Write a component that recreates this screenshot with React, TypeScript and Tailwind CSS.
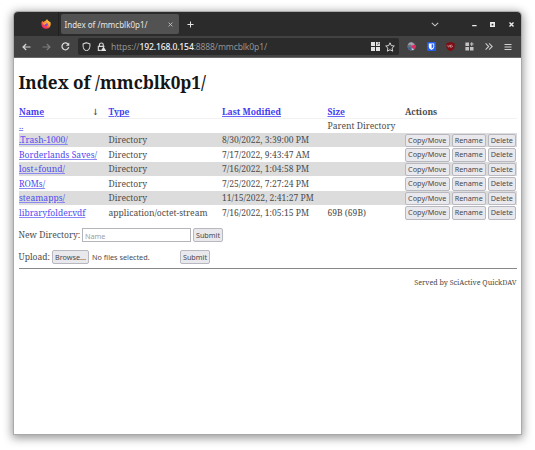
import React from "react";

const serif = "font-['Noto_Serif','DejaVu_Serif_Condensed','DejaVu_Serif',serif] [font-stretch:condensed]";
const sans = "font-['Noto_Sans',sans-serif]";

type Row = { name: string; type: string; modified: string; size: string };

const rows: Row[] = [
  { name: ".Trash-1000/", type: "Directory", modified: "8/30/2022, 3:39:00 PM", size: "" },
  { name: "Borderlands Saves/", type: "Directory", modified: "7/17/2022, 9:43:47 AM", size: "" },
  { name: "lost+found/", type: "Directory", modified: "7/16/2022, 1:04:58 PM", size: "" },
  { name: "ROMs/", type: "Directory", modified: "7/25/2022, 7:27:24 PM", size: "" },
  { name: "steamapps/", type: "Directory", modified: "11/15/2022, 2:41:27 PM", size: "" },
  { name: "libraryfolder.vdf", type: "application/octet-stream", modified: "7/16/2022, 1:05:15 PM", size: "69B (69B)" },
];

const columns = "grid grid-cols-[90px_113.5px_105.5px_77.4px_1fr] items-center";
const link = "text-[#4f4cf0] underline decoration-[#8a88f2] decoration-[1px] underline-offset-[1px]";
const headLink = "text-[#3f3cf2] underline decoration-[#6a68f4] decoration-[1px] underline-offset-[1px]";

function Button({ children, className = "" }: { children: React.ReactNode; className?: string }) {
  return (
    <button
      className={`${sans} flex h-[13.5px] shrink-0 items-center justify-center whitespace-nowrap rounded-[2px] border border-[#b8b8c0] bg-[#e9e9ed] p-0 pt-[0.5px] text-[7.25px] leading-none text-[#48484c] ${className}`}
    >
      {children}
    </button>
  );
}

function Firefox() {
  return (
    <svg viewBox="0 0 20 20" className="h-[10px] w-[10px]">
      <defs>
        <linearGradient id="flame" x1="0.9" y1="0" x2="0.2" y2="1">
          <stop offset="0" stopColor="#ffe64a" />
          <stop offset="0.45" stopColor="#ff9832" />
          <stop offset="0.75" stopColor="#fa3c4e" />
          <stop offset="1" stopColor="#e42280" />
        </linearGradient>
      </defs>
      <path d="M3 4 5 6C7 4 9 4 10 3c1-1 1-2 2-3 1 3 4 4 5 6l1-1c1 2 2 5 1 8a9.3 9.3 0 0 1-18-1C0 9 1 6 3 4Z" fill="url(#flame)" />
      <circle cx="10" cy="11" r="3.6" fill="#8246d8" />
      <path d="M4 8c3-2 5 1 8 0-1 2-4 2-5 4-2-1-3-2-3-4Z" fill="#ffa436" />
    </svg>
  );
}

function TabStrip() {
  return (
    <div className="flex h-[24px] items-center bg-[#2b2b2b] text-[#e6e6e6]">
      <div className="flex h-full w-[44.5px] items-center border-r border-[#202020] pl-[27px]">
        <Firefox />
      </div>
      <div className="ml-[2px] flex h-[20px] w-[118.5px] items-center justify-between rounded-[2px] bg-[#525252] pl-[4px] pr-[6px]">
        <span className={`${sans} whitespace-nowrap pt-[1px] text-[8px] leading-none`}>Index of /mmcblk0p1/</span>
        <svg viewBox="0 0 6 6" className="h-[5px] w-[5px]" stroke="#c9c9c9" strokeWidth="1"><path d="m.7.7 4.6 4.6M5.3.7.7 5.3" /></svg>
      </div>
      <svg viewBox="0 0 8 8" className="ml-[8px] h-[7px] w-[7px]" stroke="#e4e4e4" strokeWidth="1.2"><path d="M4 .5v7M.5 4h7" /></svg>
      <svg viewBox="0 0 8 5" className="ml-auto mr-[33px] h-[5px] w-[8px]" fill="none" stroke="#c8c8c8" strokeWidth="1.1"><path d="m.8.8 3.2 3 3.2-3" /></svg>
      <svg viewBox="0 0 6 6" className="mr-[13px] h-[6px] w-[5px]"><path d="M.2 4.3h5.3v1.4H.2z" fill="#eee" /></svg>
      <svg viewBox="0 0 6 6" className="mr-[13.5px] h-[5px] w-[5px]" fill="none" stroke="#eee" strokeWidth="1.9"><path d="M1 1h4v4H1z" /></svg>
      <svg viewBox="0 0 6 6" className="mr-[7.5px] h-[5px] w-[5px]" stroke="#eee" strokeWidth="1.6"><path d="m.6.6 4.8 4.8M5.4.6.6 5.4" /></svg>
    </div>
  );
}

function Toolbar() {
  return (
    <div className="flex h-[22px] items-center border-b border-[#686868] bg-[#424242]">
      <svg viewBox="0 0 9 8" className="ml-[8px] h-[8px] w-[9px]" fill="none" stroke="#d2d2d2" strokeWidth="1.2"><path d="M8.5 4H1m3.2-3L1 4l3.2 3" /></svg>
      <svg viewBox="0 0 9 8" className="ml-[10.5px] h-[8px] w-[9px]" fill="none" stroke="#7c7c7c" strokeWidth="1.1"><path d="M.5 4H8M4.8 1 8 4 4.8 7" /></svg>
      <svg viewBox="0 0 10 10" className="ml-[10.5px] h-[9px] w-[9px]" fill="none" stroke="#dadada" strokeWidth="1.4"><path d="M8.6 5.8A3.8 3.8 0 1 1 7.7 2.3" /><path d="M9.2.5v3.8H5.4z" fill="#dadada" stroke="none" /></svg>
      <div className="ml-[8px] flex h-[17px] w-[321px] items-center rounded-[2px] bg-[#2b2b2b] pl-[4px] pr-[4px]">
        <svg viewBox="0 0 9 10" className="h-[9.5px] w-[9px]" fill="none" stroke="#d0d0d0" strokeWidth="1.1"><path d="m4.5.7 3.6 1.3v2.5C8.100 7 6.5 8.7 4.5 9.4 2.5 8.7.9 7 .9 4.5V2Z" /></svg>
        <svg viewBox="0 0 10 10" className="ml-[5.5px] h-[9.5px] w-[9.5px]" fill="none" stroke="#d6d6d6" strokeWidth="1.2"><path d="M2.6 4.5V3a2 2 0 0 1 4 0v1.5M4 8.8H1.4V4.6h6.4" /><path d="M6.800 4.7 9.8 9.6H3.9Z" fill="#e4e4e4" stroke="none" /></svg>
        <span className={`${sans} ml-[5px] whitespace-nowrap pt-[1px] text-[8.6px] leading-none tracking-[-0.15px] text-[#929292]`}>
          https://<span className="font-medium text-[#f2f2f2]">192.168.0.154</span>:8888/mmcblk0p1/
        </span>
        <svg viewBox="0 0 9 9" className="ml-auto h-[9px] w-[9px]" fill="#e2e2e2"><path d="M0 0h4v4H0zM5 5h4v4H5zM0 5h4v4H0zM5 0h4v4H5z" /><path d="m6 3 2-2M6.5.9H8v1.5" stroke="#666" strokeWidth=".7" fill="none" /></svg>
        <svg viewBox="0 0 10 10" className="ml-[5.5px] h-[10px] w-[10px]" fill="none" stroke="#d6d6d6" strokeWidth="1"><path d="m5 .8 1.3 2.8 3 .4-2.2 2.1.6 3.1L5 7.7 2.3 9.2l.6-3.1L.7 4l3-.4Z" /></svg>
      </div>
      <svg viewBox="0 0 10 10" className="ml-[8px] h-[9px] w-[9px]"><circle cx="5" cy="5" r="4.6" fill="#6d717e" /><path d="M1 3c2-4 6-3 7 0L6 5 4 3Z" fill="#a2a1ae" /><path d="m5 4 4.5-1v4L7 8Z" fill="#e42a63" /><path d="M1 6h3v3L2 8Z" fill="#2861a5" /><path d="m5 7 3 1-2 1Z" fill="#eee" /></svg>
      <svg viewBox="0 0 9 9" className="ml-[10.500px] h-[9px] w-[9px]"><rect width="9" height="9" rx="1" fill="#245dea" /><path d="M1.8 1.4h5.4v3.4c0 1.5-1.3 2.500-2.7 3.2-1.4-.7-2.7-1.7-2.7-3.2Z" fill="#fff" /><path d="M4.6 2.3h1.7v2.5c0 .8-.9 1.5-1.7 2Z" fill="#245dea" /></svg>
      <svg viewBox="0 0 9 9" className="ml-[10px] h-[9px] w-[9px]"><path d="M4.5 0 8.6 1.2v3.2C8.6 7 6.5 8.4 4.5 9 2.5 8.4.4 7 .4 4.4V1.2Z" fill="#850b12" /><path d="M1.9 3.2v1.2q.8 1 1.5 0V3.2m1 2V3.2h1.2l1 .9-1 1.1Z" fill="none" stroke="#ddd" strokeWidth=".6" /></svg>
      <svg viewBox="0 0 9 9" className="ml-[10.5px] h-[9px] w-[9px]" fill="#c4c4c4"><path d="M.4.6H4V4H.4zM.4 5H4v3.6H.4zM5 5h3.5v3.6H5zM6.2.3h1.1v1.2h1.3v1.1H7.3v1.3H6.2V2.6H5V1.5h1.2z" /></svg>
      <svg viewBox="0 0 9 9" className="ml-[10.5px] h-[9px] w-[8px]" fill="none" stroke="#cdcdcd" strokeWidth="1.2"><path d="m.7 1 3.5 3.5L.7 8m3.9-7 3.5 3.5L4.6 8" /></svg>
      <svg viewBox="0 0 8 8" className="ml-[11px] h-[8px] w-[8px]" stroke="#d2d2d2" strokeWidth="1"><path d="M.5 1.5h7M.5 4h7M.5 6.5h7" /></svg>
    </div>
  );
}

export default function App() {
  return (
    <div className="h-[450px] w-[535px] overflow-hidden bg-white pl-[14px] pt-[12px]">
      <div className="h-[422px] w-[507px] overflow-hidden rounded-t-[4px] bg-white shadow-[0_0_0_1px_#aaaaaa,0_2px_10px_2px_#0000006b]">
        <TabStrip />
        <Toolbar />
        <main className={`${serif} px-[4.5px] text-[8.56px] leading-none text-[#4c4c4c]`}>
          <h1 className="flex h-[46px] items-center whitespace-nowrap pt-[3px] text-[17.1px] font-bold text-[#151515]">Index of /mmcblk0p1/</h1>
          <div className={`${columns} h-[15px] border-b border-[#f2f2f2] pt-[2px] font-bold`}>
            <div className="flex justify-between pl-[0.5px] pr-[10px]"><a className={headLink}>Name</a><span>↓</span></div>
            <div><a className={headLink}>Type</a></div>
            <div><a className={headLink}>Last Modified</a></div>
            <div><a className={headLink}>Size</a></div>
            <div>Actions</div>
          </div>
          <div className={`${columns} h-[14px] pt-[1px]`}>
            <div className="pl-[0.5px]"><a className={link}>..</a></div>
            <div /><div />
            <div className="whitespace-nowrap">Parent Directory</div>
          </div>
          {rows.map((row, i) => (
            <div key={row.name} className={`${columns} mb-[0.5px] h-[14px] w-[498.5px] whitespace-nowrap ${i % 2 === 0 && i < 5 ? "bg-[#dcdcdc]" : ""}`}>
              <div className="pl-[0.5px] pt-[1px]"><a className={link}>{row.name}</a></div>
              <div className="pt-[1px]">{row.type}</div>
              <div className="pt-[1px]">{row.modified}</div>
              <div className="pt-[1px]">{row.size}</div>
              <div className="flex gap-[2.3px] pt-[0.5px]">
                <Button className="w-[44.7px]">Copy/Move</Button>
                <Button className="w-[33.7px]">Rename</Button>
                <Button className="w-[28px]">Delete</Button>
              </div>
            </div>
          ))}
          <div className="mt-[8.5px] flex h-[14px] items-center whitespace-nowrap">
            <span className="w-[63.5px]">New Directory:</span>
            <input placeholder="Name" className={`${sans} h-[14px] w-[109px] border border-[#b4b4b9] bg-white px-[2px] pt-[1px] text-[7.25px] leading-none placeholder:text-[#a0a0a0]`} />
            <Button className="ml-[2px] w-[30px]">Submit</Button>
          </div>
          <div className="mt-[8px] flex h-[14px] items-center whitespace-nowrap">
            <span className="w-[33.5px]">Upload:</span>
            <Button className="w-[37px]">Browse...</Button>
            <span className={`${sans} ml-[3px] w-[88px] pt-[1px] text-[7.25px]`}>No files selected.</span>
            <Button className="w-[30px]">Submit</Button>
          </div>
          <hr className="mt-[4px] border-t border-[#888]" />
          <div className="mt-[10px] text-right text-[7.15px]">Served by SciActive QuickDAV</div>
        </main>
      </div>
    </div>
  );
}
